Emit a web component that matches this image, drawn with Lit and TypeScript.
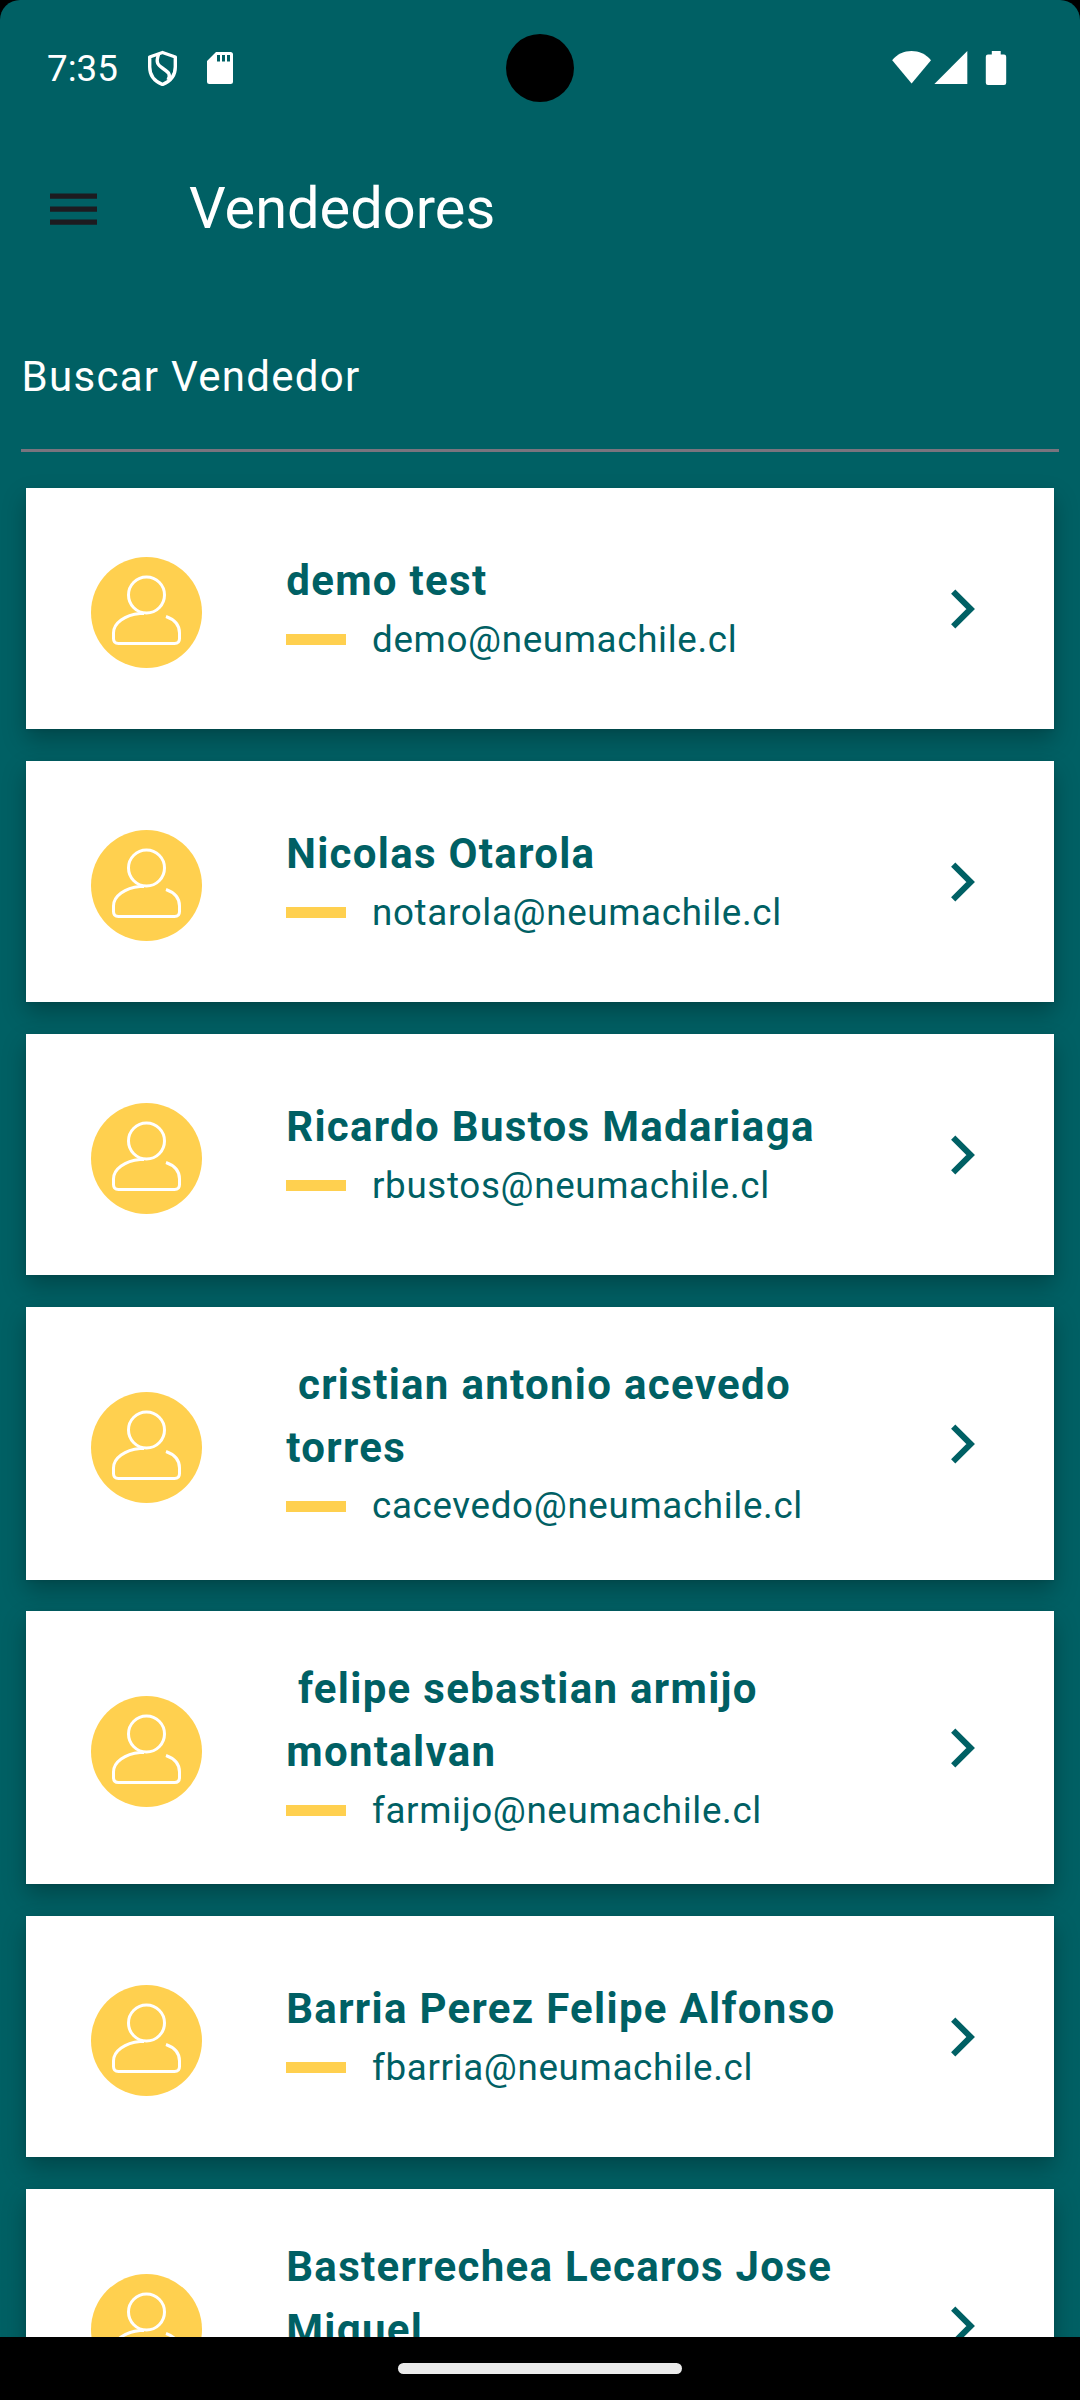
import { LitElement, html, css } from "lit";
import { customElement, property } from "lit/decorators.js";

interface Seller {
  name: string;
  email: string;
}

const SELLERS: Seller[] = [
  { name: "demo test", email: "demo@neumachile.cl" },
  { name: "Nicolas Otarola", email: "notarola@neumachile.cl" },
  { name: "Ricardo Bustos Madariaga", email: "rbustos@neumachile.cl" },
  { name: " cristian antonio acevedo torres", email: "cacevedo@neumachile.cl" },
  { name: " felipe sebastian armijo montalvan", email: "farmijo@neumachile.cl" },
  { name: "Barria Perez Felipe Alfonso", email: "fbarria@neumachile.cl" },
  { name: "Basterrechea Lecaros Jose Miguel", email: "" },
];

@customElement("seller-card")
export class SellerCard extends LitElement {
  @property() name = "";
  @property() email = "";

  static styles = css`
    :host {
      display: flex;
      align-items: center;
      flex: none;
      box-sizing: border-box;
      min-height: 241.5px;
      padding: 47.25px 77.75px 47.25px 65px;
      background: #fff;
      color: #006064;
      box-shadow: 0 11px 22px rgba(0, 0, 0, 0.26), 0 1px 3px rgba(0, 0, 0, 0.08);
    }
    .avatar {
      flex: none;
      width: 111px;
      height: 111px;
      margin-top: 8.5px;
    }
    .info {
      width: 610px;
      margin-left: 84px;
      min-height: 115.5px;
    }
    .name {
      font-size: 42px;
      line-height: 63px;
      font-weight: 700;
      letter-spacing: 1.3px;
      white-space: pre-wrap;
      margin-top: -1.2px;
      margin-bottom: 1.2px;
    }
    .row {
      display: flex;
      align-items: center;
      gap: 25.75px;
      height: 52.5px;
    }
    .dash {
      width: 60px;
      height: 11px;
      background: #ffd04f;
    }
    .email {
      position: relative;
      top: 0.5px;
      font-size: 36.75px;
      line-height: 52.5px;
      letter-spacing: 0.66px;
    }
    .chevron {
      flex: none;
      width: 26px;
      height: 40px;
      margin-left: auto;
      margin-top: 1px;
    }
  `;

  render() {
    return html`
      <svg class="avatar" viewBox="0 0 111 111" fill="none" stroke="#fff" stroke-width="3">
        <circle cx="55.5" cy="55.5" r="55.5" fill="#ffd04f" stroke="none" />
        <circle cx="55.5" cy="38" r="18" />
        <path
          d="M53 56.5H49C34 58 22.5 66 22.5 76V81.500Q22.500 86.500 27.500 86.500H83.500Q88.500 86.500 88.500 81.500V76C88.500 68.500 83.500 62.500 75 59.500"
        />
      </svg>
      <div class="info">
        <div class="name">${this.name}</div>
        <div class="row">
          <div class="dash"></div>
          <div class="email">${this.email}</div>
        </div>
      </div>
      <svg class="chevron" viewBox="0 0 26 40" fill="none" stroke="#006064" stroke-width="6">
        <path d="M3.200 2.600L20.700 20L3.200 37.400" />
      </svg>
    `;
  }
}

@customElement("app-root")
export class AppRoot extends LitElement {
  static styles = css`
    :host {
      display: block;
      background: #000;
      font-family: Roboto, "Noto Sans", sans-serif;
    }
    .screen {
      display: flex;
      flex-direction: column;
      width: 1080px;
      height: 2400px;
      overflow: hidden;
      border-radius: 20px 20px 0 0;
      background: #006064;
      color: #fff;
    }
    .status {
      flex: none;
      display: grid;
      grid-template-columns: 1fr 68px 1fr;
      align-items: center;
      height: 136px;
    }
    .left {
      display: flex;
      align-items: center;
      padding-left: 47px;
    }
    .time {
      width: 99px;
      padding-top: 2px;
      font-size: 36.75px;
      line-height: 44px;
    }
    .camera {
      height: 68px;
      border-radius: 50%;
      background: #000;
    }
    .right {
      display: flex;
      justify-content: flex-end;
      padding-right: 72px;
    }
    .appbar {
      flex: none;
      display: flex;
      align-items: center;
      height: 146px;
      padding-left: 50px;
    }
    .menu {
      width: 47px;
      height: 32px;
      margin-right: 92px;
    }
    .title {
      font-size: 57.75px;
      line-height: 73px;
      padding-bottom: 2px;
    }
    .search {
      flex: none;
      box-sizing: border-box;
      height: 170px;
      margin: 0 21px;
      padding: 63px 0 0 0.5px;
      border-bottom: 3px solid #79747e;
      font-size: 42px;
      line-height: 63px;
      letter-spacing: 1.3px;
    }
    .list {
      flex: 1;
      min-height: 0;
      display: flex;
      flex-direction: column;
      gap: 31.5px;
      padding: 35.5px 26.25px 0;
      overflow: hidden;
    }
    .nav {
      position: relative;
      flex: none;
      display: flex;
      justify-content: center;
      align-items: center;
      height: 63px;
      background: #000;
    }
    .pill {
      width: 284px;
      height: 11px;
      border-radius: 6px;
      background: #ebebeb;
    }
  `;

  render() {
    return html`
      <div class="screen">
        <div class="status">
          <div class="left">
            <div class="time">7:35</div>
            <svg width="90" height="36" viewBox="146 51 90 36">
              <g fill="none" stroke="#fff" stroke-width="3.400" stroke-linejoin="round">
                <path d="M162.500 53.500L175.300 58V68C175.300 76.500 170 82.500 162.500 85.500C155 82.500 149.700 76.500 149.700 68V58Z" />
                <path d="M158.500 55.500C155.500 64 158 66 163 69.500C169 73.500 171 75.500 168 81" />
              </g>
              <path
                fill="#fff"
                fill-rule="evenodd"
                d="M216 53H230.500Q233 53 233 55.500V82.500Q233 85 230.500 85H209.500Q207 85 207 82.500V62ZM217 56V62.500H220V56ZM222 56V62.500H225V56ZM227 56V62.500H230V56Z"
              />
            </svg>
          </div>
          <div class="camera"></div>
          <div class="right">
            <svg width="118" height="36" viewBox="890 50 118 36" fill="#fff">
              <path d="M911.600 83.500L892.200 60.200C902 48 921 48 931 60.200Z" />
              <path d="M967.300 51V84H934.400Z" />
              <path
                d="M991.800 51H1000.700V54.500H1004Q1006.200 54.500 1006.200 56.700V82.800Q1006.200 85 1004 85H988Q985.800 85 985.800 82.800V56.700Q985.800 54.500 988 54.500H991.800Z"
              />
            </svg>
          </div>
        </div>
        <div class="appbar">
          <svg class="menu" viewBox="0 0 47 32" fill="#1d1b20">
            <path d="M0 0.500H47V5.800H0ZM0 13.500H47V18.800H0ZM0 26.500H47V31.800H0Z" />
          </svg>
          <div class="title">Vendedores</div>
        </div>
        <div class="search">Buscar Vendedor</div>
        <div class="list">
          ${SELLERS.map((s) => html`<seller-card .name=${s.name} .email=${s.email}></seller-card>`)}
        </div>
        <div class="nav"><div class="pill"></div></div>
      </div>
    `;
  }
}
